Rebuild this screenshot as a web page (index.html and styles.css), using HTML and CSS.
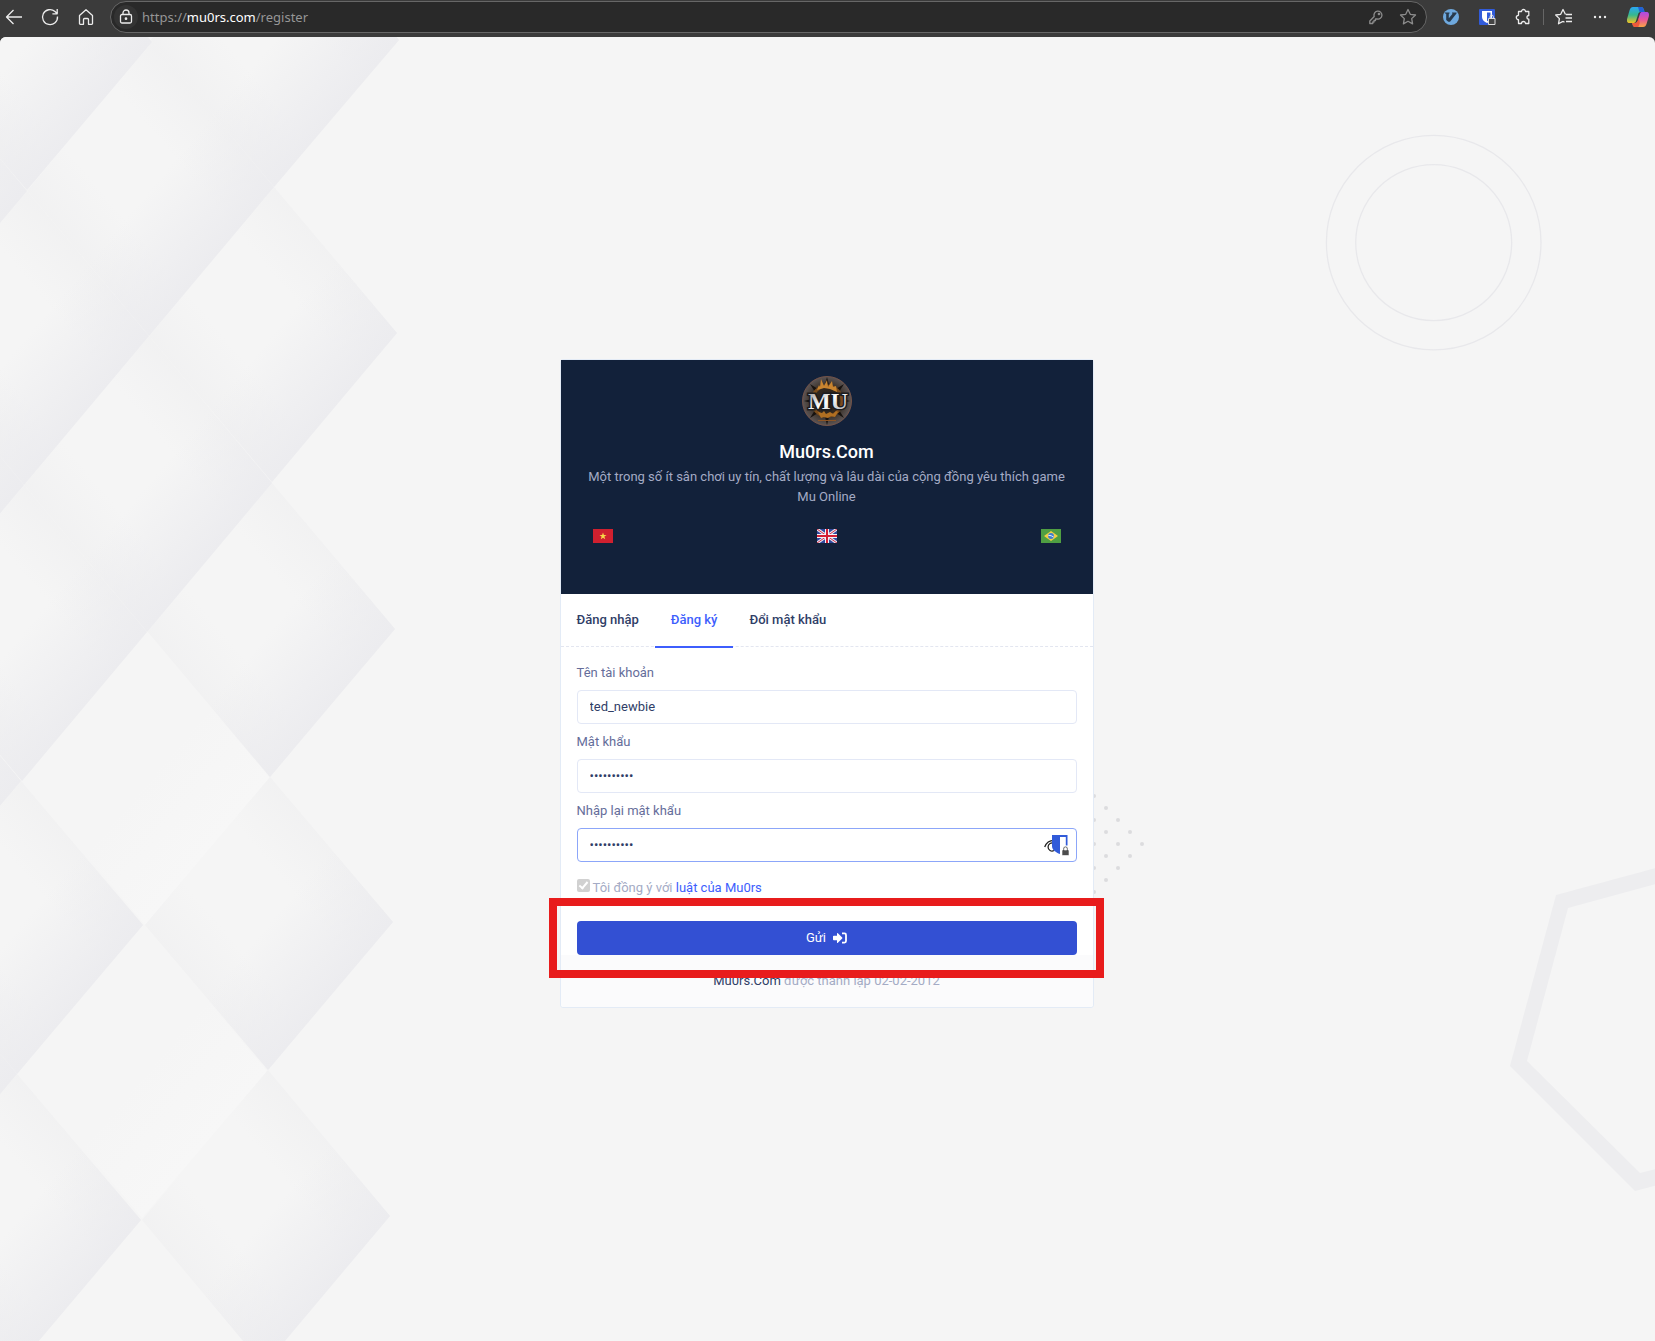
FILE: index.html
```html
<!DOCTYPE html>
<html lang="vi">
<head>
<meta charset="utf-8">
<meta name="viewport" content="width=device-width, initial-scale=1">
<title>Mu0rs.Com - Đăng ký</title>
<link rel="stylesheet" href="styles.css">
</head>
<body>
<header class="toolbar">
  <div class="toolbar-group nav-group">
    <button class="tool" type="button" aria-label="Back"><svg width="20" height="20" viewBox="0 0 20 20"><path d="M18 10H2.500M9.500 3L2.500 10l7 7"/></svg></button>
    <button class="tool" type="button" aria-label="Reload"><svg width="20" height="20" viewBox="0 0 20 20"><path d="M17.500 9.500A7.500 7.500 0 1 1 15 4.500L17 6.500M17.200 2v4.800h-4.800"/></svg></button>
    <button class="tool" type="button" aria-label="Home"><svg width="20" height="20" viewBox="0 0 20 20"><path d="M3.500 8.500L10 2.700l6.500 5.800V16.500a.8.8 0 0 1-.8.8H12.500V12.500a1 1 0 0 0-1-1h-3a1 1 0 0 0-1 1v4.800H4.300a.8.8 0 0 1-.8-.8z"/></svg></button>
  </div>
  <div class="address">
    <span class="lock"><svg width="16" height="16" viewBox="0 0 16 16"><rect x="2.500" y="5.500" width="11" height="8.500" rx="1.500"/><path d="M5 5.500V4a3 3 0 0 1 6 0v1.500"/><circle cx="8" cy="9.700" r=".7"/></svg></span>
    <span class="url">https://<span class="host">mu0rs.com</span>/register</span>
    <button class="tool dim" type="button" aria-label="Password"><svg width="16" height="16" viewBox="0 0 16 16"><path d="M6.200 7.500A4 4 0 1 1 9 10H7.500v1.500H6V13H4.800v1.500H1.800V12z"/><circle cx="11" cy="5" r=".7"/></svg></button>
    <button class="tool dim" type="button" aria-label="Favourite"><svg width="18" height="18" viewBox="0 0 18 18"><path d="M9 1.500l2.300 4.800 5.200.7-3.800 3.600.9 5.300L9 13.300l-4.600 2.600.9-5.300L1.500 7l5.200-.7z"/></svg></button>
  </div>
  <div class="toolbar-group ext-group">
    <button class="tool" type="button" aria-label="Vimium"><svg width="18" height="18" viewBox="0 0 18 18"><circle cx="9" cy="9" r="8" fill="#6fa9de" stroke="none"/><path d="M3 4.500h4.500v1l-.7.300v4.500l4-4.700-.8-.1v-1h4.500v1L8 13.800H6.300L4.200 12V5.800L3 5.500z" fill="#293a4c" stroke="none"/></svg></button>
    <button class="tool" type="button" aria-label="Bitwarden"><svg width="18" height="18" viewBox="0 0 18 18"><rect x="1" y="1" width="16" height="16" rx="1" fill="#315bd9" stroke="none"/><path d="M4 3h10v6c0 3-2.500 4.800-5 6-2.500-1.200-5-3-5-6z" fill="#fff" stroke="none"/><path d="M9 4.500h3.500V9c0 2-1.800 3.200-3.500 4.200z" fill="#315bd9" stroke="none"/><rect x="10.500" y="10.500" width="6.500" height="6" fill="#444" stroke="#ddd" stroke-width="1"/><path d="M12 10V8.800a1.700 1.700 0 0 1 3.400 0V10" stroke="#ddd" stroke-width="1"/></svg></button>
    <button class="tool" type="button" aria-label="Extensions"><svg width="18" height="18" viewBox="0 0 18 18"><path d="M4.500 3.500h3a2 2 0 0 1 4 0h3.300v4a1.500 1.500 0 0 0 0 3.700v4.300h-3.300a2 2 0 0 0-4 0h-3v-3.800a2.200 2.200 0 0 1 0-4.400z"/></svg></button>
    <span class="divider"></span>
    <button class="tool" type="button" aria-label="Favourites"><svg width="18" height="18" viewBox="0 0 18 18"><path d="M10.500 6.500L8 1.500 5.700 6.300l-5 .7 3.700 3.600-.9 5.200L8 13.400M11 6.500h6M10.500 10h6.500M11 13.500h6M8 13.400l1.500.8"/></svg></button>
    <button class="tool" type="button" aria-label="More"><svg width="18" height="18" viewBox="0 0 18 18"><g fill="#eee" stroke="none"><circle cx="4" cy="9" r="1.200"/><circle cx="9" cy="9" r="1.200"/><circle cx="14" cy="9" r="1.200"/></g></svg></button>
    <button class="tool" type="button" aria-label="Copilot"><svg width="24" height="22" viewBox="1 0 24 22">
      <defs>
        <linearGradient id="cpa" x1="0" y1="0" x2="0" y2="1"><stop offset="0" stop-color="#2aa7f4"/><stop offset=".5" stop-color="#35b88f"/><stop offset="1" stop-color="#f3c321"/></linearGradient>
        <linearGradient id="cpb" x1="0" y1="0" x2="0" y2="1"><stop offset="0" stop-color="#a94be8"/><stop offset=".5" stop-color="#e8559b"/><stop offset="1" stop-color="#fba544"/></linearGradient>
      </defs>
      <g stroke="none"><path d="M7 1h8c2 0 2.500 1.500 3 3l.5 2h-4c-1.500 0-2 1-2.400 2.200L10 15c-.5 1.500-1.500 2-3 2H3.500c-2.500 0-3-2-2.300-4.500l2.300-8C4.200 2.200 5 1 7 1z" fill="url(#cpa)"/><path d="M17 21H9.500c-2 0-2.700-1-3.300-4H9c1.500 0 2.200-.7 2.700-2l2.200-7c.5-1.500 1-2 2.500-2h4c2.500 0 3 2 2.400 4.500l-2.300 7.500c-.7 2-1.500 3-3.500 3z" fill="url(#cpb)"/><path d="M12 1h3c2 0 2.500 1.500 3 3l.5 2h-5z" fill="#2261d6"/><path d="M6.200 17H9c1.500 0 2.200-.7 2.700-2l1.100-3 1 5-1.500 4H9.500c-2 0-2.700-1-3.300-4z" fill="#ee5a3a"/></g></svg></button>
  </div>
</header>

<main class="page">
  <svg class="backdrop" viewBox="0 0 1655 1304" preserveAspectRatio="xMidYMid slice" aria-hidden="true">
    <defs>
      <linearGradient id="edge"><stop offset=".5" stop-color="#ececef" stop-opacity="0"/><stop offset=".82" stop-color="#ececef" stop-opacity=".65"/><stop offset="1" stop-color="#ececef"/></linearGradient>
      <linearGradient id="sides" x1="0" y1="0" x2="0" y2="1"><stop offset="0" stop-color="#efeff0" stop-opacity=".6"/><stop offset=".3" stop-color="#efeff0" stop-opacity="0"/><stop offset=".7" stop-color="#efeff0" stop-opacity="0"/><stop offset="1" stop-color="#efeff0" stop-opacity=".6"/></linearGradient>
      <linearGradient id="pale"><stop offset=".5" stop-color="#f7f7f7" stop-opacity="0"/><stop offset="1" stop-color="#f7f7f7"/></linearGradient>
      <g id="tile"><rect width="100" height="100" fill="#f5f5f5"/><rect width="100" height="100" fill="url(#sides)"/><rect width="100" height="100" fill="url(#edge)"/></g>
      <rect id="blank" width="100" height="100" fill="url(#pale)"/>
    </defs>
    <g>
      <use href="#blank" transform="matrix(1.23 1.46 -1.25 1.47 147 595)"/>
      <use href="#blank" transform="matrix(1.23 1.46 -1.25 1.47 144 888)"/>
      <use href="#tile" transform="matrix(1.24 1.46 -1.25 1.47 275 -143)"/>
      <use href="#tile" transform="matrix(1.23 1.46 -1.25 1.49 274 150)"/>
      <use href="#tile" transform="matrix(1.23 1.46 -1.25 1.48 272 446)"/>
      <use href="#tile" transform="matrix(1.23 1.45 -1.25 1.48 270 740)"/>
      <use href="#tile" transform="matrix(1.22 1.46 -1.26 1.50 268 1033)"/>
      <use href="#tile" transform="matrix(1.22 1.45 -1.25 1.49 152 5)"/>
      <use href="#tile" transform="matrix(1.23 1.47 -1.25 1.49 149 299)"/>
      <use href="#tile" transform="matrix(1.25 1.46 -1.25 1.48 27 -141)"/>
      <use href="#tile" transform="matrix(1.22 1.45 -1.25 1.49 27 154)"/>
      <use href="#tile" transform="matrix(1.23 1.47 -1.25 1.49 24 448)"/>
      <use href="#tile" transform="matrix(1.22 1.44 -1.26 1.49 21 744)"/>
      <use href="#tile" transform="matrix(1.24 1.46 -1.25 1.48 17 1037)"/>
      <use href="#tile" transform="matrix(1.25 1.49 -1.25 1.48 -98 5)"/>
      <use href="#tile" transform="matrix(1.24 1.49 -1.25 1.48 -100 299)"/>
      <use href="#tile" transform="matrix(1.24 1.49 -1.25 1.48 -103 595)"/>
      <use href="#tile" transform="matrix(1.23 1.49 -1.25 1.48 -106 888)"/>
    </g>
    <g fill="none" stroke="#e8e8eb" stroke-width="1.300"><circle cx="1433.700" cy="205.600" r="107.300"/><circle cx="1433.700" cy="205.600" r="78"/></g>
    <path fill="#ededef" d="M1700 819L1556 858 1510 1029 1635 1154 1700 1137V1121L1640 1136 1527 1024 1568 871 1700 835z"/>
    <g fill="#dcdcde"><circle cx="1094" cy="759" r="2"/><circle cx="1094" cy="783" r="2"/><circle cx="1094" cy="807" r="2"/><circle cx="1094" cy="831" r="2"/><circle cx="1094" cy="855" r="2"/><circle cx="1106" cy="771" r="2"/><circle cx="1106" cy="795" r="2"/><circle cx="1106" cy="819" r="2"/><circle cx="1106" cy="843" r="2"/><circle cx="1118" cy="783" r="2"/><circle cx="1118" cy="807" r="2"/><circle cx="1118" cy="831" r="2"/><circle cx="1130" cy="795" r="2"/><circle cx="1130" cy="819" r="2"/><circle cx="1142" cy="807" r="2"/></g>
  </svg>

  <section class="card">
    <div class="brand">
      <svg class="logo" width="50" height="50" viewBox="0 0 50 50" role="img" aria-label="Mu0rs">
        <defs>
          <radialGradient id="lg"><stop offset="0" stop-color="#201a18"/><stop offset=".55" stop-color="#33291f"/><stop offset="1" stop-color="#5c5555"/></radialGradient>
          <linearGradient id="steel" x1="0" y1="0" x2="1" y2="1"><stop offset="0" stop-color="#8d8d90"/><stop offset=".5" stop-color="#fff"/><stop offset="1" stop-color="#a0a0a4"/></linearGradient>
        </defs>
        <circle cx="25" cy="25" r="24.500" fill="url(#lg)" stroke="#745348"/>
        <path fill="#17120f" d="M25 1l2 8h-4zM25 49l2-8h-4zM2 25l8-2v4zM48 25l-8-2v4zM8 8l8 5-3 3zM42 8l-5 8-3-3zM8 42l5-8 3 3zM42 42l-8-5 3-3z"/>
        <circle cx="25" cy="25" r="15" fill="none" stroke="#7a4c1c" stroke-width="3"/>
        <path fill="#c98530" d="M15 14l2-5 1 2 1-8 3 7 3-6 1 7 4-6 1 6 3-1 1 6-7-3-6-1z"/>
        <path fill="#b06f22" d="M16 36l4 1 2-2 2 3 4-2 3 2 3-3 2 1-3 5-4-1-3 2-4-1-3 1z"/>
        <path fill="#8c5424" d="M16 44h18v1H16z"/>
        <text x="26" y="33" text-anchor="middle" class="logo-text">MU</text>
      </svg>
      <h1 class="brand-name">Mu0rs.Com</h1>
      <p class="brand-note">Một trong số ít sân chơi uy tín, chất lượng và lâu dài của cộng đồng yêu thích game Mu Online</p>
      <div class="langs">
        <a href="#vi" aria-label="Tiếng Việt"><svg width="20" height="14" viewBox="0 0 20 14"><path fill="#d0202f" d="M0 0h20v14H0z"/><path fill="#f8d548" d="M10 3.500l.9 2.500h2.600l-2.100 1.600.8 2.600L10 8.700l-2.200 1.500.8-2.600L6.500 6h2.600z"/></svg></a>
        <a href="#en" aria-label="English"><svg width="20" height="14" viewBox="0 0 20 14"><path fill="#31489c" d="M0 0h20v14H0z"/><path stroke="#e8e8f0" stroke-width="3" d="M0 0l20 14M20 0L0 14"/><path stroke="#d0304a" d="M0 0l20 14M20 0L0 14"/><path stroke="#f4f4f8" stroke-width="4" d="M10 0v14M0 7h20"/><path stroke="#d32035" stroke-width="2" d="M10 0v14M0 7h20"/></svg></a>
        <a href="#pt" aria-label="Português"><svg width="20" height="14" viewBox="0 0 20 14"><path fill="#4f9f42" d="M0 0h20v14H0z"/><path fill="#f2cf45" d="M10 2l7 5-7 5-7-5z"/><circle cx="10" cy="7" r="2.900" fill="#3f7fd0"/><path stroke="#e4eef8" d="M7.300 6.300q3 0 5.300 1.700" fill="none"/></svg></a>
      </div>
    </div>
    <nav class="tabs">
      <a class="tab" href="#login">Đăng nhập</a>
      <a class="tab active" href="#register">Đăng ký</a>
      <a class="tab" href="#password">Đổi mật khẩu</a>
    </nav>
    <form class="form">
      <div class="field"><label for="user">Tên tài khoản</label><input id="user" class="text-input" type="text" value="ted_newbie"></div>
      <div class="field"><label for="pass">Mật khẩu</label><input id="pass" class="text-input" type="password" value="aaaaaaaaaa"></div>
      <div class="field">
        <label for="pass2">Nhập lại mật khẩu</label>
        <div class="input-wrap">
          <input id="pass2" class="text-input focused" type="password" value="aaaaaaaaaa">
          <svg class="input-icons" width="26" height="22" viewBox="0 0 26 22" aria-hidden="true"><path d="M.7 13C2.500 8 5.500 6.300 10 6.300M10 9.500a4 4 0 1 0 0 7" fill="none" stroke="#222" stroke-width="1.300"/><path fill="#315bd9" d="M8 1h15.500v10.500h-1.700V3H16v17c-4-1.500-8-4-8-8z"/><path fill="#4c4c4c" stroke="#fff" stroke-width=".6" d="M19 16v-1.300a2.500 2.500 0 0 1 5 0V16h1v5.500h-7V16zM20.300 16h2.400v-1.300a1.200 1.200 0 0 0-2.400 0z"/></svg>
        </div>
      </div>
      <div class="agree"><input id="agree" class="check" type="checkbox" checked disabled><label for="agree">Tôi đồng ý với <a href="#rules">luật của Mu0rs</a></label></div>
      <div class="submit-row">
        <button class="submit" type="submit">Gửi <svg width="14" height="12" viewBox="0 0 14 12" aria-hidden="true"><path fill="#fff" d="M0 4.500q0-.8.8-.8H4V1.600q0-1.100.9-.4l4.300 4.200q.5.600 0 1.200L4.900 10.800q-.9.700-.9-.4V8.300H.8Q0 8.300 0 7.500z"/><path fill="none" stroke="#fff" stroke-width="1.800" d="M9 1.400h2.500q1.500 0 1.500 1.500v6.200q0 1.500-1.500 1.500H9"/></svg></button>
        <span class="highlight"></span>
      </div>
    </form>
    <footer class="foot"><a href="#home">Mu0rs.Com</a> được thành lập 02-02-2012</footer>
  </section>
</main>
</body>
</html>
```

FILE: styles.css
```css
* { box-sizing: border-box; }

body {
  margin: 0;
  min-height: 100vh;
  display: flex;
  flex-direction: column;
  background: #3b3b3b;
  font: 400 13px/20px Roboto, "Noto Sans", sans-serif;
  color: #303e67;
}

a { color: #3d5efd; text-decoration: none; }

/* Browser toolbar */
.toolbar {
  display: flex;
  align-items: center;
  height: 37px;
  padding: 0 4px 4px;
}
.toolbar-group { display: flex; align-items: center; }
.nav-group { gap: 16px; }
.ext-group { gap: 18px; margin-left: 15px; }
.tool {
  display: flex;
  padding: 0;
  border: 0;
  background: none;
}
.toolbar svg {
  fill: none;
  stroke: #ececec;
  stroke-width: 1.3;
  stroke-linejoin: round;
}
.toolbar .dim svg { stroke: #8c8c8c; }
.divider { width: 1px; height: 16px; background: #666; }
.ext-group .divider { margin: 0 -7px; }
.address {
  flex: 1;
  display: flex;
  align-items: center;
  gap: 15px;
  height: 32px;
  margin-left: 14px;
  padding: 0 9px 0 3px;
  border: 1px solid #676767;
  border-radius: 16px;
  background: #292929;
}
.lock {
  display: grid;
  place-items: center;
  width: 24px;
  height: 24px;
  border-radius: 50%;
  background: #333;
}
.url {
  flex: 1;
  margin-left: -11px;
  font: 13px/20px "Noto Sans", "Open Sans", sans-serif;
  color: #969696;
}
.host { color: #fff; }

/* Page */
.page {
  position: relative;
  flex: 1;
  display: flex;
  align-items: center;
  justify-content: center;
  padding: 16px 18px 28px 16px;
  overflow: hidden;
  border-radius: 6px 6px 0 0;
  background: #f5f5f5;
}
.backdrop {
  position: absolute;
  inset: 0;
  width: 100%;
  height: 100%;
}

.card {
  position: relative;
  width: 100%;
  max-width: 534px;
  border: 1px solid #e3ebf6;
  border-radius: 3px;
  background: #fff;
}

.brand {
  padding: 16px 16px 51px;
  background: #12213a;
  text-align: center;
}
.logo { display: block; margin: 0 auto 16px; }
.logo-text {
  font: 700 24px "Liberation Serif", serif;
  fill: url(#steel);
  stroke: #1c1c1e;
  stroke-width: 3;
  paint-order: stroke;
}
.brand-name {
  margin: 0 0 5px;
  font-size: 18px;
  font-weight: 500;
  line-height: 20px;
  color: #fff;
}
.brand-note { margin: 0; padding: 0 16px; margin: 0 -8px; color: #a4abc5; }
.langs {
  display: flex;
  justify-content: space-between;
  margin-top: 22px;
  padding: 0 16px;
}
.langs svg { display: block; }

.tabs {
  display: flex;
  border-bottom: 1px dashed #e3e6f0;
}
.tab {
  margin-bottom: -2px;
  padding: 16px;
  border-bottom: 2px solid transparent;
  font-weight: 500;
  color: #303e67;
}
.tab.active { color: #3d5efd; border-color: #3d5efd; }

.form { padding: 16px 16px 0; }
.field { margin-bottom: 8px; }
.field label {
  display: block;
  margin-bottom: 7px;
  color: #656d9a;
}
.text-input {
  display: block;
  width: 100%;
  height: 34px;
  padding: 0 12px;
  border: 1px solid #e3e8f6;
  border-radius: 4px;
  outline: 0;
  background: #fff;
  font: inherit;
  color: #303e67;
}
.text-input.focused { border-color: #8ca6f9; }
.input-wrap { position: relative; }
.input-icons { position: absolute; right: 7px; top: 6px; }

.agree {
  display: flex;
  gap: 3px;
  margin-top: 16px;
  color: #a4abc5;
}
.check {
  appearance: none;
  display: grid;
  place-items: center;
  width: 13px;
  height: 13px;
  margin: 1px 0 0;
  border-radius: 2px;
  background: #d1d1d1;
}
.check::after {
  content: "";
  box-sizing: border-box;
  width: 5px;
  height: 9px;
  margin-bottom: 2px;
  border: solid #fff;
  border-width: 0 2px 2px 0;
  transform: rotate(40deg);
}

.submit-row { position: relative; margin-top: 23px; }
.submit {
  display: flex;
  align-items: center;
  justify-content: center;
  gap: 7px;
  width: 100%;
  height: 34px;
  border: 0;
  border-radius: 4px;
  background: #3350d3;
  font: inherit;
  color: #fff;
}
.highlight {
  position: absolute;
  z-index: 1;
  inset: -23px -27px -23px -28px;
  border: 8px solid #e81c1c;
  pointer-events: none;
}

.foot {
  padding: 16px;
  border-radius: 0 0 3px 3px;
  background: #fbfbfc;
  text-align: center;
  color: #a4abc5;
}
.foot a { color: #303e67; }
```
